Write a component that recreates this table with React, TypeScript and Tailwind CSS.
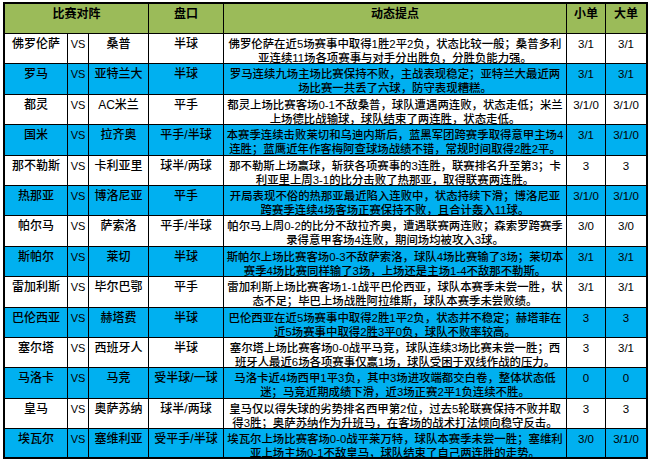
import React from "react";

type Row = {
  home: string;
  away: string;
  pan: string;
  l1: string;
  l2: string;
  small: string;
  big: string;
};

const rows: Row[] = [
  { home: "佛罗伦萨", away: "桑普", pan: "半球", l1: "佛罗伦萨在近5场赛事中取得1胜2平2负，状态比较一般；桑普多利", l2: "亚连续11场各项赛事与对手分出胜负，分胜负能力强。", small: "3/1", big: "3/1" },
  { home: "罗马", away: "亚特兰大", pan: "半球", l1: "罗马连续九场主场比赛保持不败，主战表现稳定；亚特兰大最近两", l2: "场比赛一共丢了六球，防守表现糟糕。", small: "3/1", big: "3/1" },
  { home: "都灵", away: "AC米兰", pan: "平手", l1: "都灵上场比赛客场0-1不敌桑普，球队遭遇两连败，状态走低；米兰", l2: "上场德比战输球，球队结束了两连胜，状态走低。", small: "3/1/0", big: "3/1/0" },
  { home: "国米", away: "拉齐奥", pan: "平手/半球", l1: "本赛季连续击败莱切和乌迪内斯后，蓝黑军团跨赛季取得意甲主场4", l2: "连胜；蓝鹰近年作客梅阿查球场战绩不错，常规时间取得2胜2平。", small: "3/1", big: "3/1/0" },
  { home: "那不勒斯", away: "卡利亚里", pan: "球半/两球", l1: "那不勒斯上场赢球，斩获各项赛事的3连胜，联赛排名升至第3；卡", l2: "利亚里上周3-1的比分击败了热那亚，取得联赛两连胜。", small: "3", big: "3" },
  { home: "热那亚", away: "博洛尼亚", pan: "平手", l1: "开局表现不俗的热那亚最近陷入连败中，状态持续下滑；博洛尼亚", l2: "跨赛季连续4场客场正赛保持不败，且合计轰入11球。", small: "3/1/0", big: "3/1/0" },
  { home: "帕尔马", away: "萨索洛", pan: "平手/半球", l1: "帕尔马上周0-2的比分不敌拉齐奥，遭遇联赛两连败；森索罗跨赛季", l2: "录得意甲客场4连败，期间场均被攻入3球。", small: "3/0", big: "3/0" },
  { home: "斯帕尔", away: "莱切", pan: "半球", l1: "斯帕尔上场比赛客场0-3不敌萨索洛，球队4场比赛输了3场；莱切本", l2: "赛季4场比赛同样输了3场，上场还是主场1-4不敌那不勒斯。", small: "3/1", big: "3/1" },
  { home: "雷加利斯", away: "毕尔巴鄂", pan: "平手", l1: "雷加利斯上场比赛客场1-1战平巴伦西亚，球队本赛季未尝一胜，状", l2: "态不足；毕巴上场战胜阿拉维斯，球队本赛季未尝败绩。", small: "3/1", big: "3/1" },
  { home: "巴伦西亚", away: "赫塔费", pan: "半球", l1: "巴伦西亚在近5场赛事中取得2胜1平2负，状态并不稳定；赫塔菲在", l2: "近5场赛事中取得2胜3平0负，球队不败率较高。", small: "3", big: "3" },
  { home: "塞尔塔", away: "西班牙人", pan: "半球", l1: "塞尔塔上场比赛客场0-0战平马竞，球队连续3场比赛未尝一胜；西", l2: "班牙人最近6场各项赛事仅赢1场，球队受困于双线作战的压力。", small: "3", big: "3/1" },
  { home: "马洛卡", away: "马竞", pan: "受半球/一球", l1: "马洛卡近4场西甲1平3负，其中3场进攻端都交白卷，整体状态低", l2: "迷；马竞近期成绩下滑，近3场正赛2平1负连续不胜。", small: "0", big: "0" },
  { home: "皇马", away: "奥萨苏纳", pan: "球半/两球", l1: "皇马仅以得失球的劣势排名西甲第2位，过去5轮联赛保持不败并取", l2: "得3胜；奥萨苏纳作为升班马，在客场的战术打法倾向稳守反击。", small: "3", big: "3" },
  { home: "埃瓦尔", away: "塞维利亚", pan: "受平手/半球", l1: "埃瓦尔上场比赛客场0-0战平莱万特，球队本赛季未尝一胜；塞维利", l2: "亚上场主场0-1不敌皇马，球队结束了自己两连胜的走势。", small: "3/0", big: "3/1/0" },
];

const font = {
  fontFamily: '"Liberation Sans", "Noto Sans CJK SC", sans-serif',
};

const cell = "border-r border-b border-black text-center overflow-hidden whitespace-nowrap";

export default function App() {
  return (
    <div className="w-[650px] h-[462px] bg-white pl-[3px] pt-[2px] overflow-hidden text-black" style={font}>
      <div className="w-[645px] border-l-2 border-t-2 border-black">
        <div className="grid grid-cols-[63px_21px_60px_75px_343px_39px_42px] h-[30px] bg-[#9bbb59] text-[12px] leading-[16px] font-bold">
          <div className="col-span-3 border-r border-b border-black text-center pt-[2px]">比赛对阵</div>
          <div className="border-r border-b border-black text-center pt-[2px]">盘口</div>
          <div className="border-r border-b border-black text-center pt-[2px]">动态提点</div>
          <div className="border-r border-b border-black text-center pt-[2px]">小单</div>
          <div className="border-r-2 border-b border-black text-center pt-[2px]">大单</div>
        </div>
        {rows.map((r, i) => (
          <div
            key={i}
            className={`grid grid-cols-[63px_21px_60px_75px_343px_39px_42px] h-[30.4px] leading-[14px] font-medium ${
              i % 2 === 1 ? "bg-[#00b0f0]" : "bg-white"
            } ${i === rows.length - 1 ? "border-b border-black" : ""}`}
          >
            <div className={`${cell} pt-[3px] text-[12px]`}>{r.home}</div>
            <div className={`${cell} pt-[3px] text-[11px]`}>VS</div>
            <div className={`${cell} pt-[3px] text-[12px]`}>{r.away}</div>
            <div className={`${cell} pt-[3px] text-[12px]`}>{r.pan}</div>
            <div className={`${cell} pt-[3px] text-[11.4px]`}>
              <div>{r.l1}</div>
              <div>{r.l2}</div>
            </div>
            <div className={`${cell} pt-[3px] text-[11.5px] font-normal`}>{r.small}</div>
            <div className="border-r-2 border-b border-black text-center overflow-hidden whitespace-nowrap pt-[3px] text-[11.5px] font-normal">{r.big}</div>
          </div>
        ))}
      </div>
    </div>
  );
}
